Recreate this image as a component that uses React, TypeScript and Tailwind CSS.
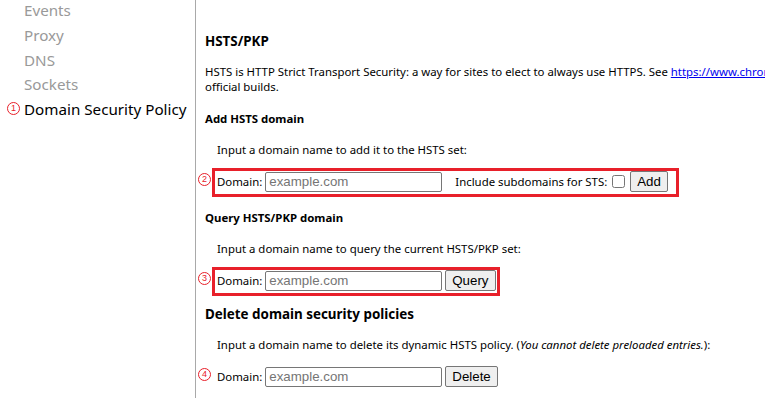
import type { ReactNode } from 'react';

const navItems = ['Events', 'Proxy', 'DNS', 'Sockets'];

function Badge({ n }: { n: number }) {
  return (
    <span className="flex h-[13px] w-[13px] items-center justify-center rounded-full border border-[#e8202a] text-[9px] leading-none text-[#e8202a] font-['Liberation_Sans',sans-serif]">
      {n}
    </span>
  );
}

function DomainInput() {
  return (
    <input
      placeholder="example.com"
      className="h-[20px] w-[177px] rounded-[2px] border border-[#767676] px-[3px] text-[13.3px] text-black placeholder:text-[#757575] font-['Liberation_Sans',sans-serif] outline-none"
    />
  );
}

function Btn({ children, className = '' }: { children: ReactNode; className?: string }) {
  return (
    <button
      className={`h-[21px] rounded-[2px] border border-[#767676] bg-[#efefef] px-[6px] text-[13.3px] leading-none text-black font-['Liberation_Sans',sans-serif] ${className}`}
    >
      {children}
    </button>
  );
}

function Row({ n, box, children }: { n: number; box?: 'wide' | 'narrow'; children: ReactNode }) {
  return (
    <div className="relative ml-[12px] mt-[14px] flex h-[21px] w-fit items-center gap-[3px]">
      <div className="absolute left-[-19px] top-[2px]">
        <Badge n={n} />
      </div>
      {box && (
        <div
          className={`pointer-events-none absolute left-[-5px] top-[-3px] bottom-[-5px] border-[3px] border-[#e8202a] ${
            box === 'wide' ? 'right-[-11px]' : 'right-[-4px]'
          }`}
        />
      )}
      {children}
    </div>
  );
}

export default function App() {
  return (
    <div className="flex h-[398px] w-[765px] overflow-hidden bg-white text-black font-['Noto_Sans',sans-serif]">
      <aside className="w-[196px] shrink-0 border-r border-[#a9a9a9]">
        <ul className="mt-[-2px] whitespace-nowrap text-[15.2px] leading-[24.8px]">
          {navItems.map((item) => (
            <li key={item} className="pl-[24px] text-[#999]">
              {item}
            </li>
          ))}
          <li className="relative pl-[24px] text-black">
            <span className="absolute left-[7px] top-[5px]">
              <Badge n={1} />
            </span>
            Domain Security Policy
          </li>
        </ul>
      </aside>

      <main className="min-w-0 flex-1 overflow-hidden whitespace-nowrap pl-[9px] pt-[32px] text-[11.4px] leading-[15px]">
        <h2 className="text-[13.4px] font-bold leading-[18px]">HSTS/PKP</h2>
        <p className="mt-[14px]">
          HSTS is HTTP Strict Transport Security: a way for sites to elect to always use HTTPS. See{' '}
          <a className="text-[#0000ee] underline">https://www.chromium.org/hsts</a>
          <br />
          official builds.
        </p>

        <h3 className="mt-[17px] font-bold">Add HSTS domain</h3>
        <p className="mt-[16px] pl-[12px]">Input a domain name to add it to the HSTS set:</p>
        <Row n={2} box="wide">
          <span>Domain:</span>
          <DomainInput />
          <span className="ml-[10px]">Include subdomains for STS:</span>
          <input type="checkbox" className="ml-[2px] h-[13px] w-[13px]" />
          <Btn className="ml-[2px]">Add</Btn>
        </Row>

        <h3 className="mt-[18px] font-bold">Query HSTS/PKP domain</h3>
        <p className="mt-[16px] pl-[12px]">Input a domain name to query the current HSTS/PKP set:</p>
        <Row n={3} box="narrow">
          <span>Domain:</span>
          <DomainInput />
          <Btn>Query</Btn>
        </Row>

        <h2 className="mt-[14px] text-[13.4px] font-bold leading-[18px]">Delete domain security policies</h2>
        <p className="mt-[14px] pl-[12px]">
          Input a domain name to delete its dynamic HSTS policy. (<i>You cannot delete preloaded entries.</i>):
        </p>
        <Row n={4}>
          <span>Domain:</span>
          <DomainInput />
          <Btn>Delete</Btn>
        </Row>
      </main>
    </div>
  );
}
